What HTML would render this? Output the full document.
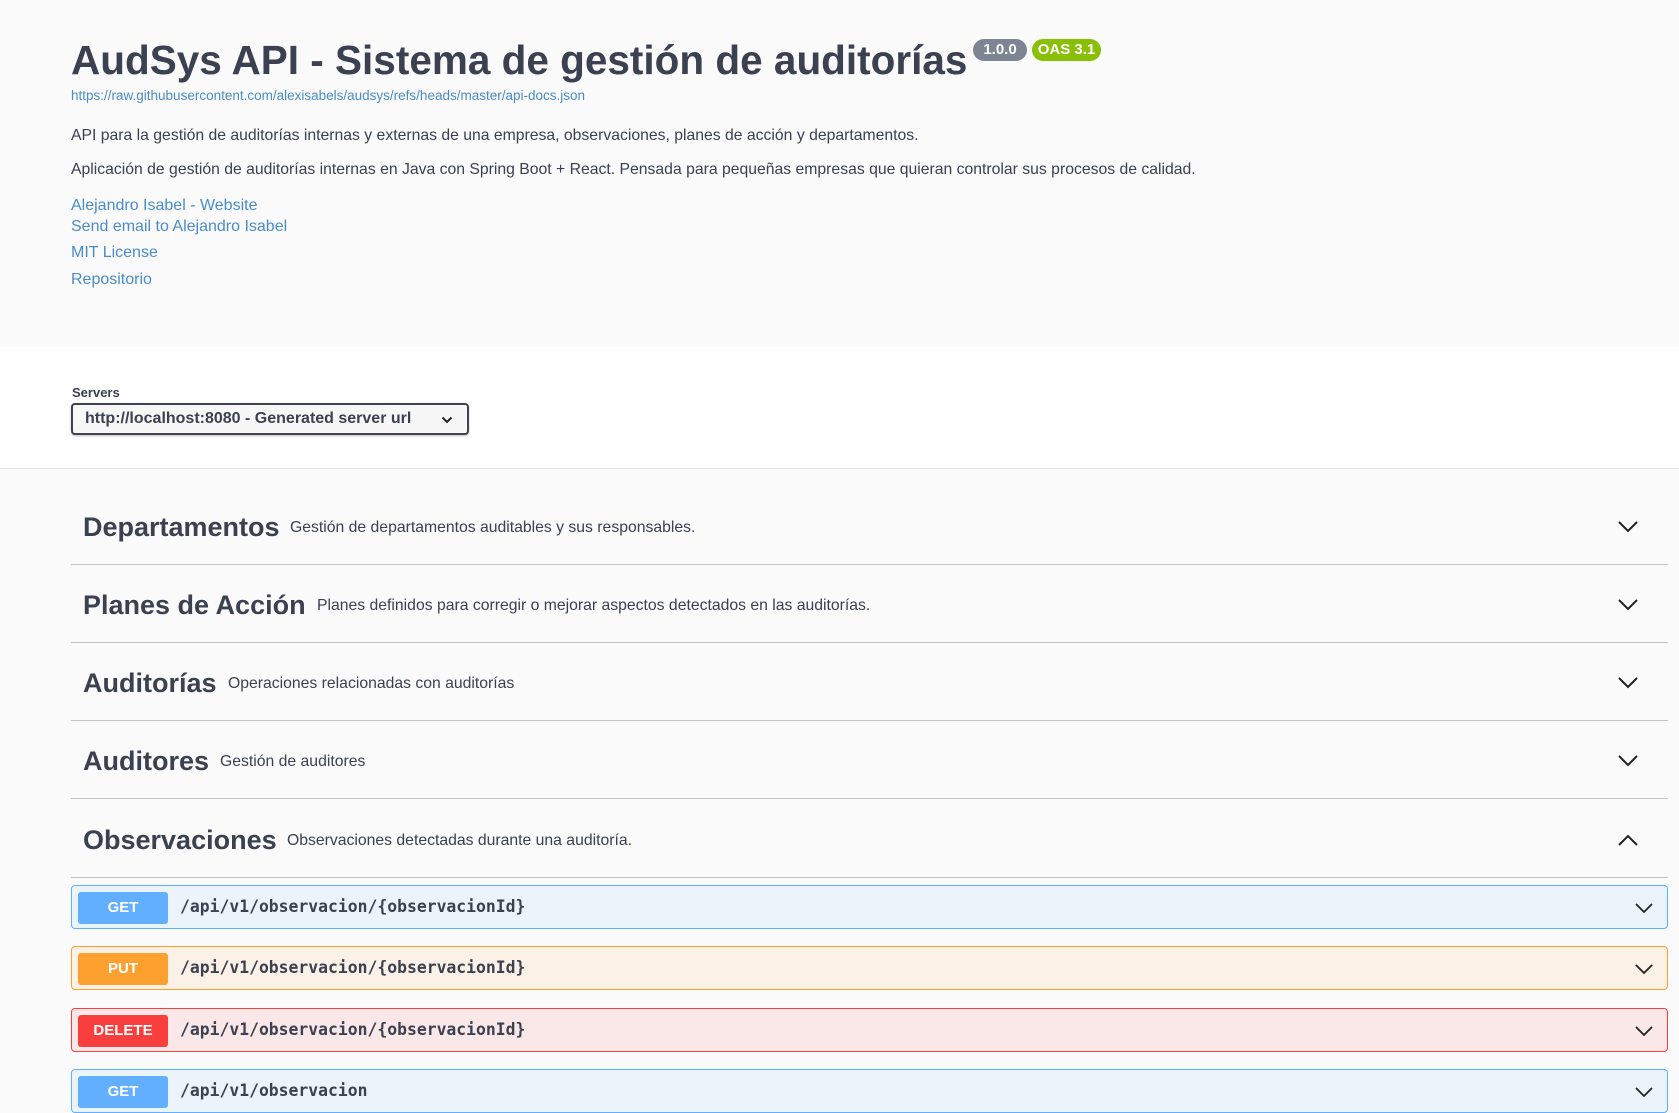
<!DOCTYPE html>
<html><head><meta charset="utf-8"><style>
*{margin:0;padding:0;box-sizing:border-box}
body{width:1679px;height:1102px;overflow:hidden;background:#fafafa;font-family:"Liberation Sans",Arial,sans-serif;color:#3b4151;position:relative}
.abs{position:absolute;white-space:nowrap}
.info{position:absolute;left:0;top:0;width:1679px;height:347px;background:#fafafa}
.white{position:absolute;left:0;top:347px;width:1679px;height:122px;background:#fff;border-bottom:1px solid #e5e5e5}
.badge{position:absolute;top:39px;height:22px;border-radius:11px;color:#fff;font-size:15px;font-weight:bold;text-align:center;line-height:22px}
.link{color:#4a8cc9}
.tag{position:absolute;left:71px;width:1597px;height:78px;border-bottom:1px solid #c3c3c3}
.tag b{position:absolute;left:12px;top:25px;font-size:27px;color:#3b4151;white-space:nowrap}
.tag span{font-size:15.75px;color:#3b4151;position:absolute;top:32px;white-space:nowrap}
.chev{position:absolute;right:30px;top:34px}
.op{position:absolute;left:71px;width:1597px;height:44px;border-radius:4px;border:1px solid}
.m{position:absolute;left:6px;top:6px;width:90px;height:32px;border-radius:3px;color:#fff;font-weight:bold;font-size:15px;text-align:center;line-height:32px}
.p{position:absolute;left:108px;top:11px;font-family:"DejaVu Sans Mono","Liberation Mono",monospace;font-weight:bold;font-size:16.4px;color:#3b4151;white-space:nowrap}
.op svg{position:absolute;right:14px;top:17px}
</style></head><body>
<div class="info"></div>
<div class="white"></div>
<div class="abs" style="left:71px;top:37px;font-size:40.5px;font-weight:bold">AudSys API - Sistema de gestión de auditorías</div>
<div class="badge" style="left:973px;width:54px;background:#7d8492">1.0.0</div>
<div class="badge" style="left:1032px;width:69px;background:#89bf04">OAS 3.1</div>
<div class="abs link" style="left:71px;top:88px;font-size:13.5px">https://raw.githubusercontent.com/alexisabels/audsys/refs/heads/master/api-docs.json</div>
<div class="abs" style="left:71px;top:127px;font-size:15.75px">API para la gestión de auditorías internas y externas de una empresa, observaciones, planes de acción y departamentos.</div>
<div class="abs" style="left:71px;top:161px;font-size:15.75px">Aplicación de gestión de auditorías internas en Java con Spring Boot + React. Pensada para pequeñas empresas que quieran controlar sus procesos de calidad.</div>
<div class="abs link" style="left:71px;top:197px;font-size:16px">Alejandro Isabel - Website</div>
<div class="abs link" style="left:71px;top:218px;font-size:16px">Send email to Alejandro Isabel</div>
<div class="abs link" style="left:71px;top:244px;font-size:16px">MIT License</div>
<div class="abs link" style="left:71px;top:271px;font-size:16px">Repositorio</div>
<div class="abs" style="left:72px;top:385px;font-size:13px;font-weight:bold">Servers</div>
<div class="abs" style="left:71px;top:403px;width:398px;height:32px;border:2px solid #41444e;border-radius:4px;background:#f7f7f7;box-shadow:0 1px 2px rgba(0,0,0,.25);font-size:16px;font-weight:bold;padding:5px 0 0 12px">http://localhost:8080 - Generated server url
<svg style="position:absolute;right:14px;top:11px" width="12" height="8" viewBox="0 0 12 8"><path d="M1.5 1.5L6 6l4.5-4.5" fill="none" stroke="#222" stroke-width="2"/></svg></div>

<div class="tag" style="top:487px"><b>Departamentos</b><span style="left:219px">Gestión de departamentos auditables y sus responsables.</span><svg class="chev" width="20" height="12" viewBox="0 0 20 12"><path d="M1 1l9 9 9-9" fill="none" stroke="#222" stroke-width="2"/></svg></div>
<div class="tag" style="top:565px"><b>Planes de Acción</b><span style="left:246px">Planes definidos para corregir o mejorar aspectos detectados en las auditorías.</span><svg class="chev" width="20" height="12" viewBox="0 0 20 12"><path d="M1 1l9 9 9-9" fill="none" stroke="#222" stroke-width="2"/></svg></div>
<div class="tag" style="top:643px"><b>Auditorías</b><span style="left:157px">Operaciones relacionadas con auditorías</span><svg class="chev" width="20" height="12" viewBox="0 0 20 12"><path d="M1 1l9 9 9-9" fill="none" stroke="#222" stroke-width="2"/></svg></div>
<div class="tag" style="top:721px"><b>Auditores</b><span style="left:149px">Gestión de auditores</span><svg class="chev" width="20" height="12" viewBox="0 0 20 12"><path d="M1 1l9 9 9-9" fill="none" stroke="#222" stroke-width="2"/></svg></div>
<div class="tag" style="top:800px"><b>Observaciones</b><span style="left:216px">Observaciones detectadas durante una auditoría.</span><svg class="chev" width="20" height="12" viewBox="0 0 20 12"><path d="M1 11l9-9 9 9" fill="none" stroke="#222" stroke-width="2"/></svg></div>

<div class="op" style="top:885px;background:#ebf3fb;border-color:#61affe"><div class="m" style="background:#61affe">GET</div><div class="p">/api/v1/observacion/{observacionId}</div><svg width="18" height="10" viewBox="0 0 18 10"><path d="M1 1l8 8 8-8" fill="none" stroke="#222" stroke-width="1.8"/></svg></div>
<div class="op" style="top:946px;background:#fbf1e6;border-color:#fca130"><div class="m" style="background:#fca130">PUT</div><div class="p">/api/v1/observacion/{observacionId}</div><svg width="18" height="10" viewBox="0 0 18 10"><path d="M1 1l8 8 8-8" fill="none" stroke="#222" stroke-width="1.8"/></svg></div>
<div class="op" style="top:1008px;background:#fae7e7;border-color:#f93e3e"><div class="m" style="background:#f93e3e">DELETE</div><div class="p">/api/v1/observacion/{observacionId}</div><svg width="18" height="10" viewBox="0 0 18 10"><path d="M1 1l8 8 8-8" fill="none" stroke="#222" stroke-width="1.8"/></svg></div>
<div class="op" style="top:1069px;background:#ebf3fb;border-color:#61affe"><div class="m" style="background:#61affe">GET</div><div class="p">/api/v1/observacion</div><svg width="18" height="10" viewBox="0 0 18 10"><path d="M1 1l8 8 8-8" fill="none" stroke="#222" stroke-width="1.8"/></svg></div>
</body></html>
